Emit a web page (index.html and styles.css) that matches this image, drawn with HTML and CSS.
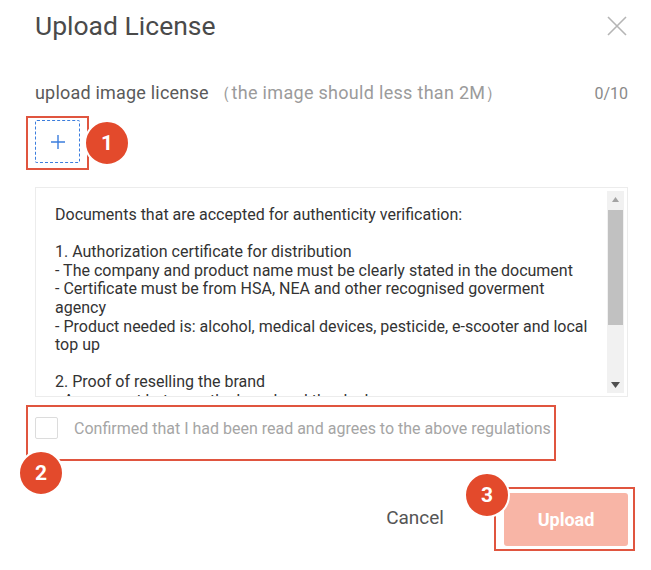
FILE: index.html
```html
<!DOCTYPE html>
<html>
<head>
<meta charset="utf-8">
<link rel="stylesheet" href="styles.css">
</head>
<body>
<div class="dialog">
  <div class="header">
    <h1 class="title">Upload License</h1>
    <svg class="close" width="20" height="20" viewBox="0 0 20 20"><path d="M1 1L19 19M19 1L1 19" stroke="#b5b5b5" stroke-width="1.6" fill="none"/></svg>
  </div>
  <div class="label-row">
    <div class="label">upload image license <span class="hint">（the image should less than 2M）</span></div>
    <div class="count">0/10</div>
  </div>
  <div class="upload-wrap">
    <div class="hl hl-upload"></div>
    <div class="upload-box">
      <svg width="14" height="14" viewBox="0 0 14 14"><path d="M7 0V14M0 7H14" stroke="#3b7ddd" stroke-width="1.4"/></svg>
    </div>
    <div class="badge badge-1">1</div>
  </div>
  <div class="terms">
    <div class="terms-text">
      <p>Documents that are accepted for authenticity verification:</p>
      <p class="blank"></p>
      <p>1. Authorization certificate for distribution</p>
      <p>- The company and product name must be clearly stated in the document</p>
      <p>- Certificate must be from HSA, NEA and other recognised goverment agency</p>
      <p>- Product needed is: alcohol, medical devices, pesticide, e-scooter and local top up</p>
      <p class="blank"></p>
      <p>2. Proof of reselling the brand</p>
      <p>- Agreement between the brand and the dealer</p>
    </div>
    <div class="scrollbar">
      <div class="arrow"><svg width="7" height="5" viewBox="0 0 7 5"><path d="M3.5 0L7 5H0Z" fill="#a3a3a3"/></svg></div>
      <div class="track"><div class="thumb"></div></div>
      <div class="arrow"><svg width="9" height="6" viewBox="0 0 9 6"><path d="M0 0H9L4.5 6Z" fill="#505050"/></svg></div>
    </div>
  </div>
  <div class="confirm-wrap">
    <div class="hl hl-confirm"></div>
    <label class="confirm">
      <span class="checkbox"></span>
      <span class="confirm-text">Confirmed that I had been read and agrees to the above regulations</span>
    </label>
    <div class="badge badge-2">2</div>
  </div>
  <div class="footer">
    <button class="btn-cancel">Cancel</button>
    <div class="upload-btn-wrap">
      <div class="hl hl-btn"></div>
      <button class="btn-upload">Upload</button>
      <div class="badge badge-3">3</div>
    </div>
  </div>
</div>
</body>
</html>
```
FILE: styles.css
```css
* { box-sizing: border-box; }
body {
  margin: 0;
  background: #fff;
  font-family: Roboto, "Liberation Sans", sans-serif;
}
.dialog {
  width: 651px;
  height: 570px;
  padding: 0 23px 0 35px;
  position: relative;
}
.header {
  display: flex;
  justify-content: space-between;
  align-items: center;
  height: 50px;
  padding-top: 0;
}
.title {
  margin: 0;
  font-size: 26.5px;
  font-weight: 400;
  color: #4a4a4a;
}
.close { margin-right: 1px; margin-top: 2px; }
.label-row {
  display: flex;
  justify-content: space-between;
  align-items: center;
  margin-top: 33px;
  height: 20px;
}
.label {
  font-size: 18px;
  letter-spacing: 0.2px;
  color: #5a5a5a;
}
.hint { color: #9b9b9b; letter-spacing: 0.3px; }
.count {
  font-size: 16px;
  color: #8a8a8a;
}
.upload-wrap {
  position: relative;
  margin-top: 17px;
  height: 43px;
  width: 45px;
}
.upload-box {
  width: 45px;
  height: 43px;
  border: 1.5px dashed #3b7ddd;
  border-radius: 2px;
  display: flex;
  align-items: center;
  justify-content: center;
}
.hl {
  position: absolute;
  border: 2px solid #e0553f;
}
.hl-upload { left: -9px; top: -4px; width: 63px; height: 54px; }
.badge {
  position: absolute;
  width: 46px;
  height: 46px;
  border-radius: 50%;
  background: #e34a2c;
  border: 2px solid #fff;
  color: #fff;
  font-weight: 700;
  font-size: 21px;
  display: flex;
  align-items: center;
  justify-content: center;
}
.badge-1 { left: 49px; top: 0px; }
.terms {
  margin-top: 24px;
  height: 210px;
  border: 1px solid #ececec;
  display: flex;
}
.terms-text {
  flex: 1;
  overflow: hidden;
  padding: 18px 16px 0 19px;
  font-size: 16px;
  line-height: 18.6px;
  color: #333;
}
.terms-text p { margin: 0; }
.terms-text .blank { height: 18.6px; }
.scrollbar {
  width: 17px;
  margin: 3px 3px 3px 0;
  background: #f1f1f1;
  display: flex;
  flex-direction: column;
}
.arrow {
  height: 17px;
  display: flex;
  align-items: center;
  justify-content: center;
}
.track { flex: 1; padding: 2px 1px; }
.thumb {
  height: 115px;
  background: #c1c1c1;
}
.confirm-wrap {
  position: relative;
  margin-top: 20px;
  height: 22px;
}
.hl-confirm { left: -9px; top: -12px; width: 530px; height: 56px; }
.confirm {
  display: flex;
  align-items: center;
  gap: 16px;
}
.checkbox {
  width: 23px;
  height: 22px;
  border: 1px solid #dcdcdc;
  border-radius: 2px;
}
.confirm-text {
  font-size: 16px;
  color: #a5a5a5;
}
.badge-2 { left: -17px; top: 33px; }
.footer {
  display: flex;
  justify-content: flex-end;
  align-items: center;
  margin-top: 54px;
  gap: 60px;
}
.btn-cancel {
  border: 0;
  background: none;
  padding: 0 0 4px;
  font-family: inherit;
  font-size: 19px;
  color: #555;
}
.upload-btn-wrap { position: relative; }
.btn-upload {
  width: 124px;
  height: 53px;
  border: 0;
  border-radius: 3px;
  background: #f8b5a6;
  color: #fff;
  font-family: inherit;
  font-weight: 700;
  font-size: 18px;
}
.hl-btn { left: -10px; top: -6px; width: 141px; height: 64px; }
.badge-3 { left: -40px; top: -21px; }
```
